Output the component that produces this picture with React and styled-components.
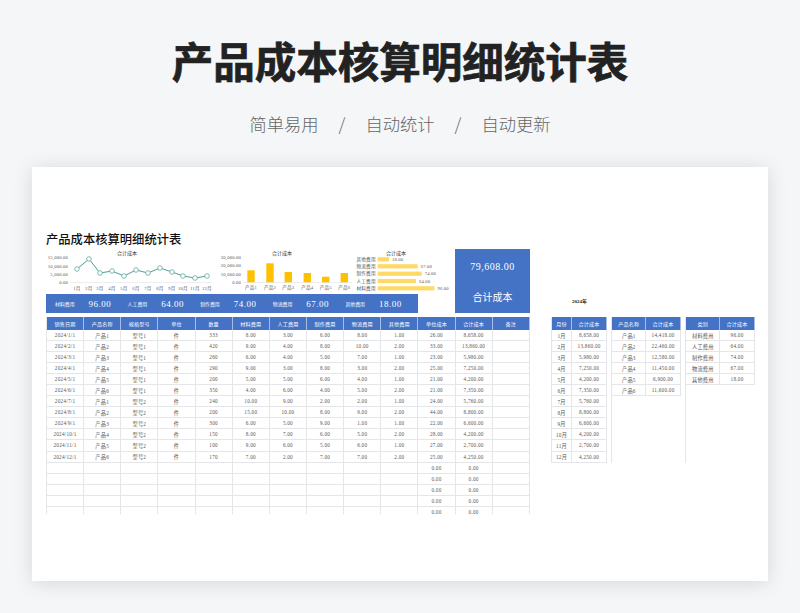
import React from "react";
import styled, { createGlobalStyle } from "styled-components";

const GlobalStyle = createGlobalStyle`
  html, body {
    margin: 0;
    padding: 0;
    background: #f5f6f8;
  }
`;

const serif = `"Liberation Serif", "Noto Sans CJK SC", serif`;
const blue = "#4472c4";

const Page = styled.div`
  width: 800px;
  height: 613px;
  overflow: hidden;
  display: flex;
  flex-direction: column;
  align-items: center;
  font-family: "Noto Sans CJK SC", sans-serif;
`;

const Heading = styled.h1`
  margin: 30px 0 0;
  font-size: 41.5px;
  line-height: 60px;
  font-weight: 700;
  color: #222;
  -webkit-text-stroke: 0.7px #222;
`;

const Slogans = styled.div`
  margin-top: 21px;
  display: flex;
  align-items: center;
  gap: 20px;
  font-size: 17.3px;
  line-height: 26px;
  font-weight: 300;
  color: #666;
`;

const Card = styled.div`
  margin-top: 30px;
  width: 736px;
  height: 414px;
  box-sizing: border-box;
  padding: 64px 0 0 14px;
  background: #fff;
  box-shadow: 0 2px 18px rgba(0, 0, 0, 0.13);
`;

const SheetTitle = styled.div`
  height: 16px;
  margin-bottom: 2px;
  font-size: 12.3px;
  line-height: 16px;
  font-weight: 500;
  color: #111;
`;

const TopRow = styled.div`
  display: flex;
  height: 64px;
  margin-bottom: 4px;
`;

const LeftColumn = styled.div`
  width: 409px;
  display: flex;
  flex-direction: column;
`;

const Charts = styled.div`
  display: flex;
  height: 45px;
`;

const Band = styled.div`
  width: 372px;
  height: 19px;
  box-sizing: border-box;
  padding-left: 9px;
  display: flex;
  align-items: center;
  background: ${blue};
  color: #fff;
  font-family: ${serif};
`;

const BandItem = styled.div`
  width: 74.4px;
  display: flex;
  align-items: center;
  gap: 14px;
`;

const BandLabel = styled.span`
  font-size: 4.9px;
  white-space: nowrap;
`;

const BandValue = styled.span`
  font-size: 9px;
  letter-spacing: 0.5px;
`;

const TotalBox = styled.div`
  width: 75px;
  height: 64px;
  box-sizing: border-box;
  padding-top: 11px;
  display: flex;
  flex-direction: column;
  align-items: center;
  gap: 18px;
  background: ${blue};
  color: #fff;
  font-family: ${serif};
`;

const TotalValue = styled.div`
  font-size: 10px;
  line-height: 13px;
  letter-spacing: 0.5px;
`;

const TotalLabel = styled.div`
  font-size: 10px;
  line-height: 14px;
`;

const YearNote = styled.div`
  margin: 49px 0 0 42px;
  font-family: ${serif};
  font-size: 5px;
  line-height: 8px;
  font-weight: 700;
  color: #222;
`;

const BottomRow = styled.div`
  display: flex;
  align-items: flex-start;
`;

const MainWrap = styled.div`
  height: 197px;
  overflow: hidden;
  margin-right: 21px;
`;

const SideTables = styled.div`
  display: flex;
  gap: 4.5px;
`;

const Grid = styled.div`
  display: grid;
  grid-template-columns: ${(p) => p.$columns};
  grid-template-rows: 13px;
  grid-auto-rows: 11.05px;
  border-left: 1px solid #e4e6ea;
  font-family: ${serif};
`;

const HeadCell = styled.div`
  display: flex;
  align-items: center;
  justify-content: center;
  background: ${blue};
  border-right: 1px solid #a9bde3;
  color: #fff;
  font-size: 5.1px;
  letter-spacing: 0.15px;
  white-space: nowrap;
`;

const Cell = styled.div`
  display: flex;
  align-items: center;
  justify-content: center;
  border-right: 1px solid #e4e6ea;
  border-bottom: 1px solid #e4e6ea;
  color: #555;
  font-size: 5.2px;
  letter-spacing: 0.25px;
  white-space: nowrap;
`;

const ChartTitle = styled.text`
  font-family: ${serif};
  font-size: 5px;
  fill: #333;
  text-anchor: middle;
`;

const AxisText = styled.text`
  font-family: ${serif};
  font-size: 4.6px;
  letter-spacing: 0.2px;
  fill: #555;
  text-anchor: ${(p) => p.$anchor || "middle"};
`;

const mainHead = ["销售日期", "产品名称", "规格型号", "单位", "数量", "材料费用", "人工费用", "制作费用", "物流费用", "其他费用", "单位成本", "合计成本", "备注"];

const mainRows = [
  ["2024/1/1", "产品1", "型号1", "件", "333", "8.00", "3.00", "6.00", "8.00", "1.00", "26.00", "8,658.00", ""],
  ["2024/2/1", "产品2", "型号1", "件", "420", "9.00", "4.00", "8.00", "10.00", "2.00", "33.00", "13,860.00", ""],
  ["2024/3/1", "产品3", "型号1", "件", "260", "6.00", "4.00", "5.00", "7.00", "1.00", "23.00", "5,980.00", ""],
  ["2024/4/1", "产品4", "型号1", "件", "290", "9.00", "3.00", "8.00", "3.00", "2.00", "25.00", "7,250.00", ""],
  ["2024/5/1", "产品5", "型号1", "件", "200", "5.00", "5.00", "6.00", "4.00", "1.00", "21.00", "4,200.00", ""],
  ["2024/6/1", "产品6", "型号1", "件", "350", "4.00", "6.00", "4.00", "5.00", "2.00", "21.00", "7,350.00", ""],
  ["2024/7/1", "产品1", "型号2", "件", "240", "10.00", "9.00", "2.00", "2.00", "1.00", "24.00", "5,760.00", ""],
  ["2024/8/1", "产品2", "型号2", "件", "200", "15.00", "10.00", "8.00", "9.00", "2.00", "44.00", "8,800.00", ""],
  ["2024/9/1", "产品3", "型号2", "件", "300", "6.00", "5.00", "9.00", "1.00", "1.00", "22.00", "6,600.00", ""],
  ["2024/10/1", "产品4", "型号2", "件", "150", "8.00", "7.00", "6.00", "5.00", "2.00", "28.00", "4,200.00", ""],
  ["2024/11/1", "产品5", "型号2", "件", "100", "9.00", "6.00", "5.00", "6.00", "1.00", "27.00", "2,700.00", ""],
  ["2024/12/1", "产品6", "型号2", "件", "170", "7.00", "2.00", "7.00", "7.00", "2.00", "25.00", "4,250.00", ""],
  ...Array.from({ length: 5 }, () => ["", "", "", "", "", "", "", "", "", "", "0.00", "0.00", ""]),
];

const monthRows = [
  ["1月", "8,658.00"], ["2月", "13,860.00"], ["3月", "5,980.00"], ["4月", "7,250.00"],
  ["5月", "4,200.00"], ["6月", "7,350.00"], ["7月", "5,760.00"], ["8月", "8,800.00"],
  ["9月", "6,600.00"], ["10月", "4,200.00"], ["11月", "2,700.00"], ["12月", "4,250.00"],
];

const productRows = [
  ["产品1", "14,418.00"], ["产品2", "22,460.00"], ["产品3", "12,580.00"],
  ["产品4", "11,450.00"], ["产品5", "6,900.00"], ["产品6", "11,600.00"],
];

const categoryRows = [
  ["材料费用", "96.00"], ["人工费用", "64.00"], ["制作费用", "74.00"], ["物流费用", "67.00"], ["其他费用", "18.00"],
];

const bandItems = [
  ["材料费用", "96.00"], ["人工费用", "64.00"], ["制作费用", "74.00"], ["物流费用", "67.00"], ["其他费用", "18.00"],
];

const linePoints = [[31, 20], [43, 10], [54, 24], [66, 22], [78, 27], [90, 21], [102, 24], [114, 19], [126, 23], [137, 27], [149, 29], [161, 27]];

const bars = [
  { x: 36, top: 21.3, label: "产品1" },
  { x: 55, top: 14.3, label: "产品2" },
  { x: 73.3, top: 23, label: "产品3" },
  { x: 92.3, top: 24, label: "产品4" },
  { x: 110.7, top: 27.7, label: "产品5" },
  { x: 129.3, top: 24, label: "产品6" },
];

const hbars = [
  { y: 10.3, w: 11.3, label: "其他费用", value: "18.00" },
  { y: 17.3, w: 40, label: "物流费用", value: "67.00" },
  { y: 24.7, w: 44, label: "制作费用", value: "74.00" },
  { y: 32, w: 38.3, label: "人工费用", value: "64.00" },
  { y: 39.3, w: 56.7, label: "材料费用", value: "96.00" },
];

const LineChart = () => (
  <svg width="169" height="45" viewBox="0 0 169 45">
    <ChartTitle x="81" y="6">合计成本</ChartTitle>
    {[["15,000.00", 10], ["10,000.00", 18.5], ["5,000.00", 26.5], ["0.00", 35]].map(([t, y]) => (
      <AxisText key={t} x="22" y={y} $anchor="end">{t}</AxisText>
    ))}
    <line x1="24" y1="33.5" x2="165" y2="33.5" stroke="#e2e2e2" strokeWidth="0.6" />
    <polyline
      points={linePoints.map((p) => p.join(",")).join(" ")}
      fill="none"
      stroke="#4f9d94"
      strokeWidth="1"
    />
    {linePoints.map(([x, y], i) => (
      <circle key={x} cx={x} cy={y} r="2.3" fill="#fff" stroke="#62aaa1" strokeWidth="0.8" />
    ))}
    {linePoints.map(([x], i) => (
      <AxisText key={x} x={x} y="40.5">{i + 1}月</AxisText>
    ))}
  </svg>
);

const BarChart = () => (
  <svg width="139" height="45" viewBox="0 0 139 45">
    <ChartTitle x="67" y="6">合计成本</ChartTitle>
    {[["30,000.00", 9.5], ["20,000.00", 18], ["10,000.00", 26.5], ["0.00", 35]].map(([t, y]) => (
      <AxisText key={t} x="26" y={y} $anchor="end">{t}</AxisText>
    ))}
    <line x1="28" y1="33.5" x2="137" y2="33.5" stroke="#e2e2e2" strokeWidth="0.6" />
    {bars.map((b) => (
      <g key={b.label}>
        <rect x={b.x - 3.7} y={b.top} width="7.4" height={33.3 - b.top} fill="#ffc000" />
        <AxisText x={b.x} y="40">{b.label}</AxisText>
      </g>
    ))}
  </svg>
);

const HBarChart = () => (
  <svg width="101" height="45" viewBox="0 0 101 45" style={{ overflow: "visible" }}>
    <ChartTitle x="42" y="6">合计成本</ChartTitle>
    {hbars.map((b) => (
      <g key={b.label}>
        <AxisText x="21.7" y={b.y + 1.7} $anchor="end">{b.label}</AxisText>
        <rect x="23.7" y={b.y - 2.1} width={b.w} height="4.2" fill="#ffd966" />
        <AxisText x={23.7 + b.w + 3} y={b.y + 1.7} $anchor="start">{b.value}</AxisText>
      </g>
    ))}
  </svg>
);

const DataGrid = ({ columns, head, rows }) => (
  <Grid $columns={columns}>
    {head.map((h) => (
      <HeadCell key={h}>{h}</HeadCell>
    ))}
    {rows.map((row, i) =>
      row.map((v, j) => <Cell key={`${i}-${j}`}>{v}</Cell>)
    )}
  </Grid>
);

const App = () => (
  <Page>
    <GlobalStyle />
    <Heading>产品成本核算明细统计表</Heading>
    <Slogans>
      <span>简单易用</span>
      <span>/</span>
      <span>自动统计</span>
      <span>/</span>
      <span>自动更新</span>
    </Slogans>
    <Card>
      <SheetTitle>产品成本核算明细统计表</SheetTitle>
      <TopRow>
        <LeftColumn>
          <Charts>
            <LineChart />
            <BarChart />
            <HBarChart />
          </Charts>
          <Band>
            {bandItems.map(([label, value]) => (
              <BandItem key={label}>
                <BandLabel>{label}</BandLabel>
                <BandValue>{value}</BandValue>
              </BandItem>
            ))}
          </Band>
        </LeftColumn>
        <TotalBox>
          <TotalValue>79,608.00</TotalValue>
          <TotalLabel>合计成本</TotalLabel>
        </TotalBox>
        <YearNote>2024年</YearNote>
      </TopRow>
      <BottomRow>
        <MainWrap>
          <DataGrid columns="repeat(13, 37.15px)" head={mainHead} rows={mainRows} />
        </MainWrap>
        <SideTables>
          <DataGrid columns="20.5px 34.5px" head={["月份", "合计成本"]} rows={monthRows} />
          <DataGrid columns="34px 34.5px" head={["产品名称", "合计成本"]} rows={productRows} />
          <DataGrid columns="34px 34.5px" head={["类别", "合计成本"]} rows={categoryRows} />
        </SideTables>
      </BottomRow>
    </Card>
  </Page>
);

export default App;
